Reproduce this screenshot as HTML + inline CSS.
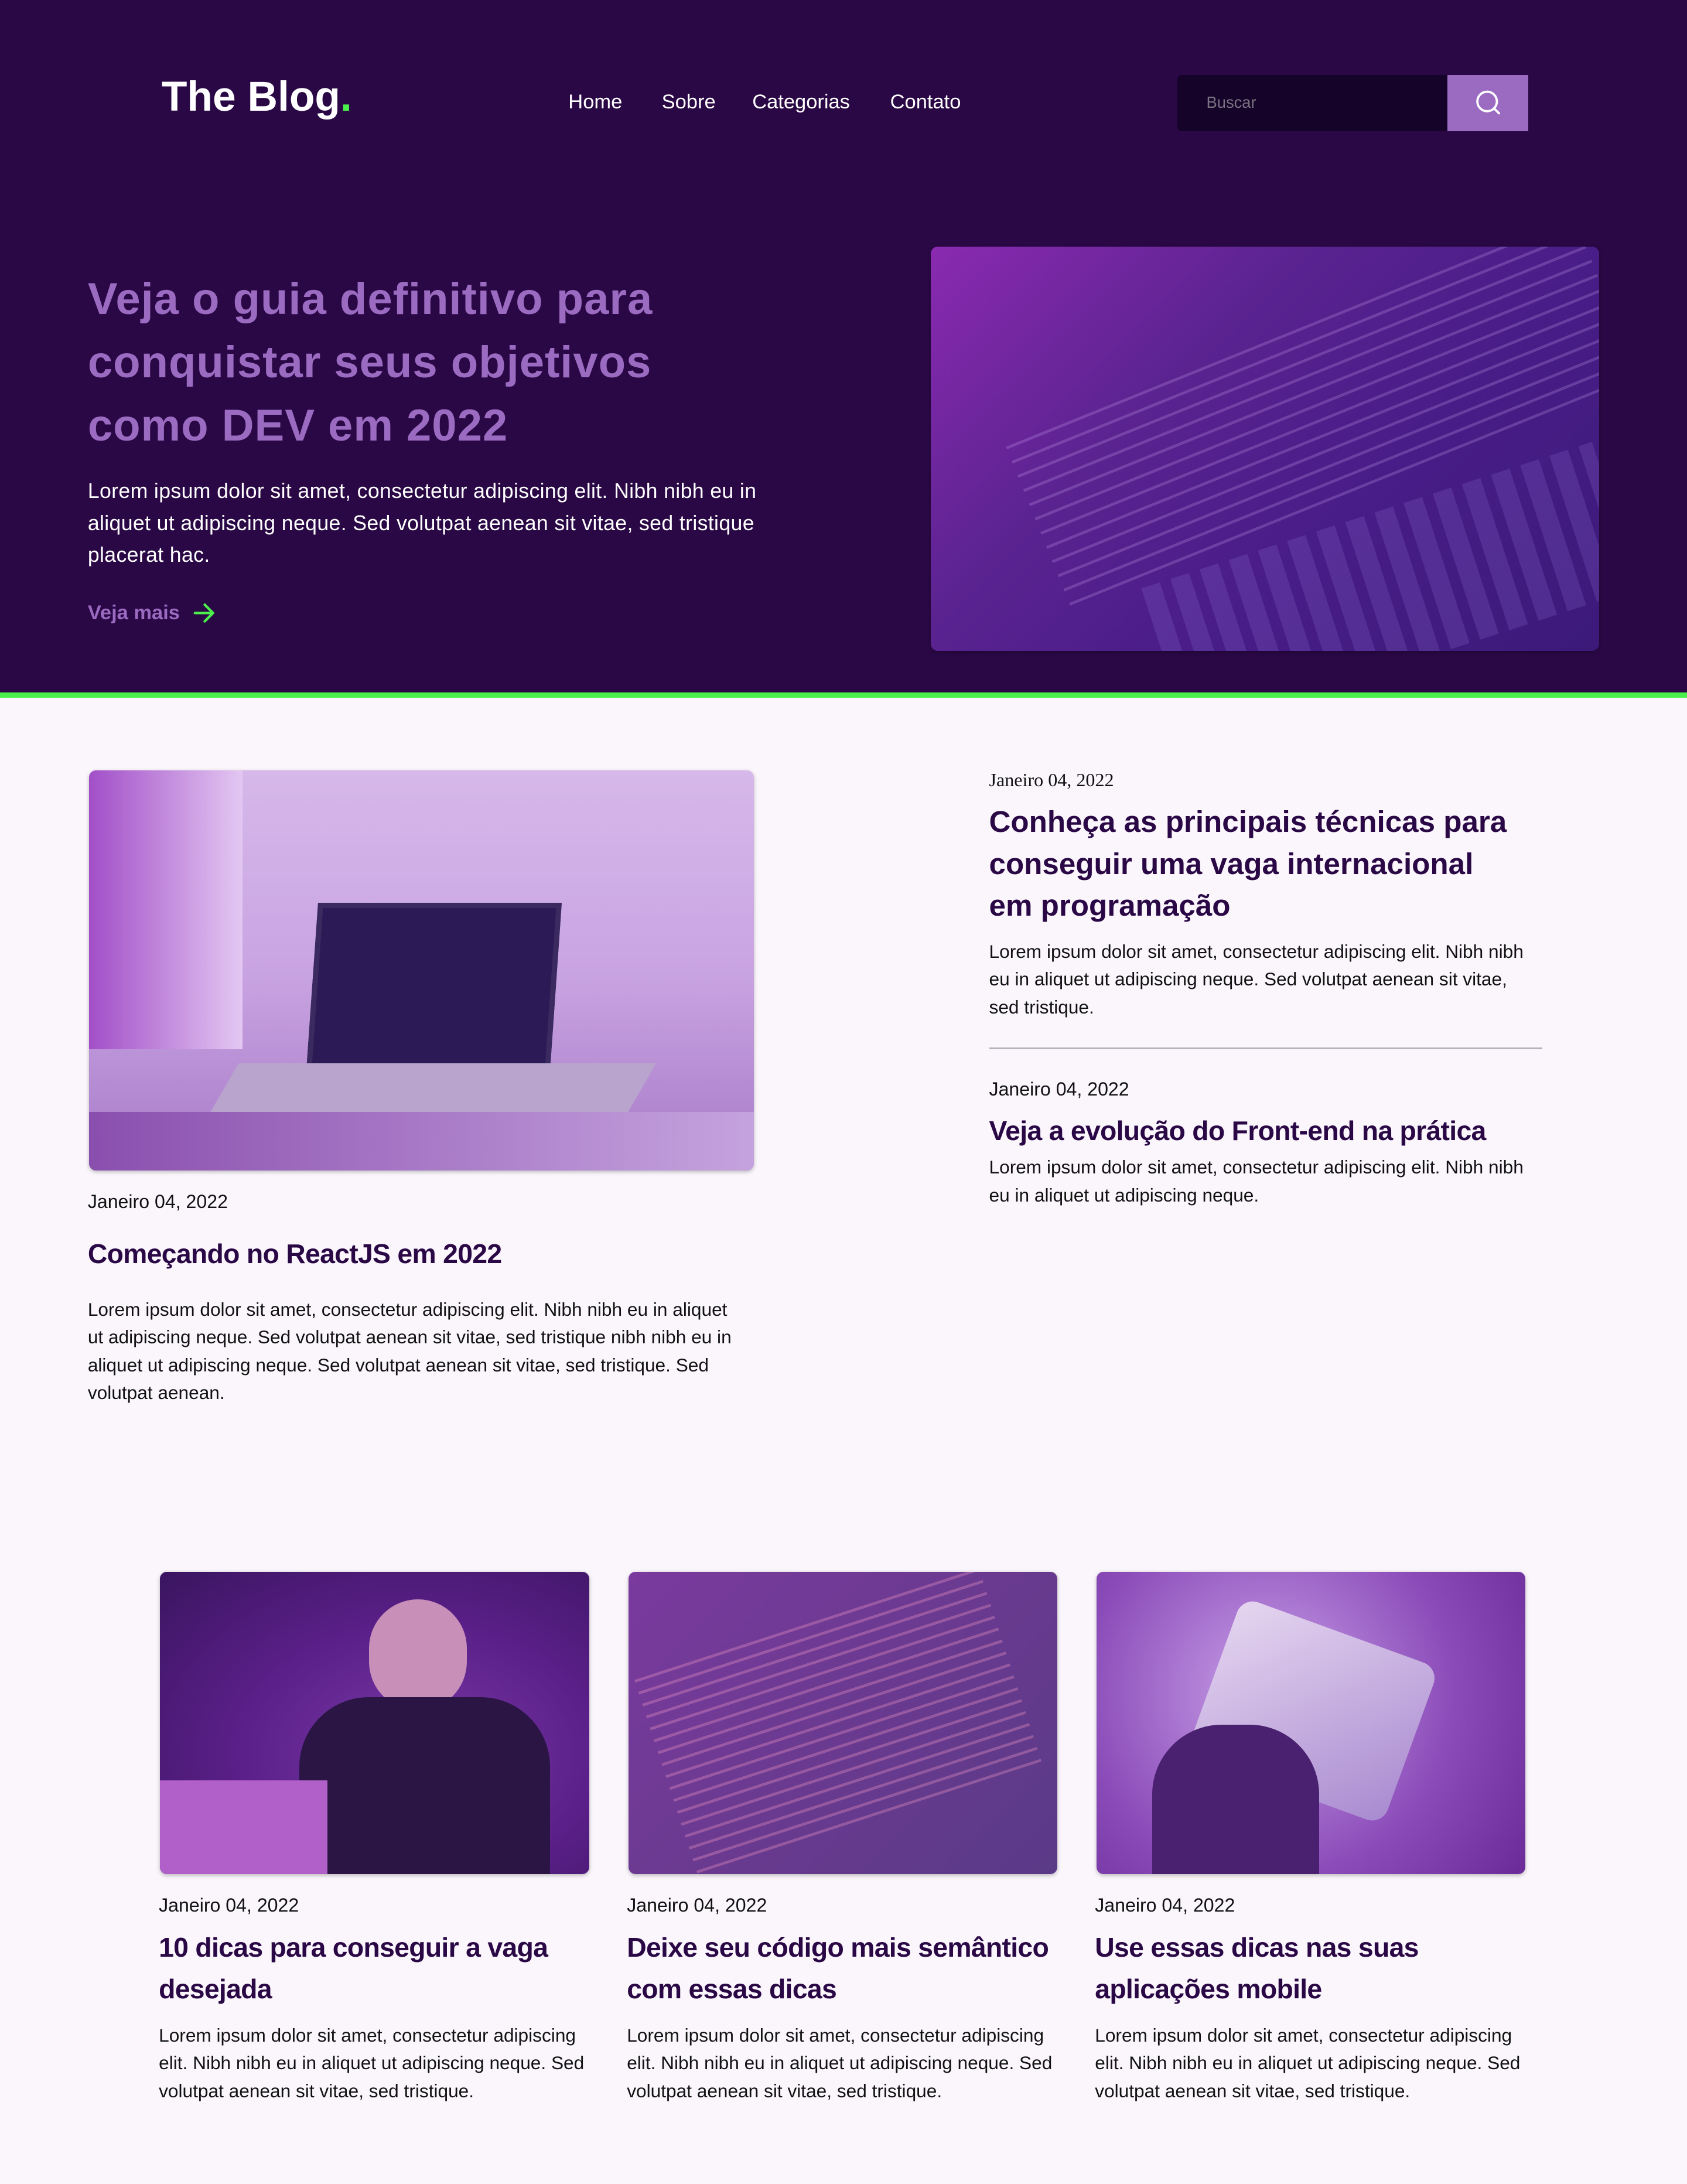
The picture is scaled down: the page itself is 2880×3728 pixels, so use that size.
<!DOCTYPE html>
<html><head><meta charset="utf-8"><style>
*{margin:0;padding:0;box-sizing:border-box}
html,body{width:2880px;height:3728px;overflow:hidden;background:#faf6fc}
#w{zoom:2.3782;width:1211px;height:1568px;position:relative;font-family:"Liberation Sans",sans-serif;background:#faf6fc}
.a{position:absolute;white-space:nowrap}
.hdr{position:absolute;left:0;top:0;width:1211px;background:#2a0845;border-bottom:4px solid #4cf04c;height:501px}
.nav{font-size:14.5px;color:#fff;top:65px}
.img{position:absolute;border-radius:5px;box-shadow:0 1px 3px rgba(0,0,0,.25);overflow:hidden}
.date{font-size:13.5px;color:#111}
.tt{font-weight:bold;color:#2a0845;font-size:19.5px;letter-spacing:-.3px;line-height:30px}
.p{font-size:13.3px;line-height:20px;color:#111;letter-spacing:0}
</style></head><body><div id="w">
<div class="hdr"></div>
<div class="a" style="left:116px;top:52px;font-size:30px;font-weight:bold;color:#fff">The Blog<span style="color:#4cf04c">.</span></div>
<div class="a nav" style="left:408px">Home</div>
<div class="a nav" style="left:475px">Sobre</div>
<div class="a nav" style="left:540px">Categorias</div>
<div class="a nav" style="left:639px">Contato</div>
<div class="a" style="left:845px;top:54px;width:195px;height:40px;background:#15032a;border-radius:3px 0 0 3px"></div>
<div class="a" style="left:866px;top:67px;font-size:11.5px;color:#7a7280">Buscar</div>
<div class="a" style="left:1039px;top:54px;width:58px;height:40px;background:#9b6bc2">
<svg width="58" height="40" viewBox="0 0 58 40"><circle cx="28.5" cy="19" r="7" fill="none" stroke="#fff" stroke-width="1.6"/><line x1="33.5" y1="24" x2="37" y2="27.5" stroke="#fff" stroke-width="1.6" stroke-linecap="round"/></svg></div>
<div class="a" style="left:63px;top:192px;font-size:32px;font-weight:bold;color:#9b6bc2;line-height:45.5px;letter-spacing:.4px">Veja o guia definitivo para<br>conquistar seus objetivos<br>como DEV em 2022</div>
<div class="a" style="left:63px;top:341px;font-size:15px;line-height:23px;color:#fff;letter-spacing:.15px">Lorem ipsum dolor sit amet, consectetur adipiscing elit. Nibh nibh eu in<br>aliquet ut adipiscing neque. Sed volutpat aenean sit vitae, sed tristique<br>placerat hac.</div>
<div class="a" style="left:63px;top:432px;font-size:14.5px;font-weight:bold;color:#9b6bc2">Veja mais</div>
<svg class="a" style="left:138px;top:431px" width="18" height="18" viewBox="0 0 18 18"><path d="M2 9H15M9 3l6 6-6 6" fill="none" stroke="#4cf04c" stroke-width="1.8" stroke-linecap="round" stroke-linejoin="round"/></svg>
<div class="img" style="left:668px;top:177px;width:480px;height:290px;background:linear-gradient(135deg,#8a2ab0 0%,#5a2390 35%,#4a1d88 60%,#3b1a7a 100%)">
<div style="position:absolute;left:60px;top:50px;width:440px;height:130px;transform:rotate(-22deg);background:repeating-linear-gradient(0deg,rgba(220,180,255,.22) 0 2px,transparent 2px 11px)"></div>
<div style="position:absolute;left:160px;top:190px;width:340px;height:110px;transform:rotate(-18deg);background:repeating-linear-gradient(90deg,rgba(150,120,220,.2) 0 14px,transparent 14px 22px)"></div></div>

<div class="img" style="left:64px;top:553px;width:477px;height:287px;background:linear-gradient(180deg,#d7b8ea 0%,#c9a4e2 50%,#a77ac8 100%)">
<div style="position:absolute;left:0;top:0;width:110px;height:200px;background:linear-gradient(90deg,#a24fc8,#e3c7f2)"></div>
<div style="position:absolute;left:160px;top:95px;width:175px;height:120px;background:#2b1a55;border:4px solid #3a2a60;transform:skewX(-4deg)"></div>
<div style="position:absolute;left:90px;top:210px;width:300px;height:60px;background:#b8a4cc;transform:skewX(-30deg)"></div>
<div style="position:absolute;left:0;top:245px;width:477px;height:42px;background:linear-gradient(90deg,#8a4fae,#c5a3de)"></div></div>
<div class="a date" style="left:63px;top:855px">Janeiro 04, 2022</div>
<div class="a tt" style="left:63px;top:885px">Começando no ReactJS em 2022</div>
<div class="a p" style="left:63px;top:930px">Lorem ipsum dolor sit amet, consectetur adipiscing elit. Nibh nibh eu in aliquet<br>ut adipiscing neque. Sed volutpat aenean sit vitae, sed tristique nibh nibh eu in<br>aliquet ut adipiscing neque. Sed volutpat aenean sit vitae, sed tristique. Sed<br>volutpat aenean.</div>

<div class="a" style="left:710px;top:552px;font-family:'Liberation Serif',serif;font-size:13.5px;color:#111">Janeiro 04, 2022</div>
<div class="a" style="left:710px;top:575px;font-size:21.5px;font-weight:bold;color:#2a0845;line-height:30px;letter-spacing:0">Conheça as principais técnicas para<br>conseguir uma vaga internacional<br>em programação</div>
<div class="a p" style="left:710px;top:673px">Lorem ipsum dolor sit amet, consectetur adipiscing elit. Nibh nibh<br>eu in aliquet ut adipiscing neque. Sed volutpat aenean sit vitae,<br>sed tristique.</div>
<div class="a" style="left:710px;top:752px;width:397px;height:1px;background:#b8b2bc"></div>
<div class="a date" style="left:710px;top:774px">Janeiro 04, 2022</div>
<div class="a tt" style="left:710px;top:797px">Veja a evolução do Front-end na prática</div>
<div class="a p" style="left:710px;top:828px">Lorem ipsum dolor sit amet, consectetur adipiscing elit. Nibh nibh<br>eu in aliquet ut adipiscing neque.</div>

<div class="img" style="left:115px;top:1128px;width:308px;height:217px;background:radial-gradient(ellipse at 60% 60%,#7a3aa8 0%,#5a1f88 50%,#3a1560 100%)">
<div style="position:absolute;left:150px;top:20px;width:70px;height:80px;border-radius:40px;background:#c890b8"></div>
<div style="position:absolute;left:100px;top:90px;width:180px;height:127px;border-radius:50px 50px 0 0;background:#2a1545"></div>
<div style="position:absolute;left:0;top:150px;width:120px;height:67px;background:#b060c8"></div></div>
<div class="img" style="left:451px;top:1128px;width:308px;height:217px;background:linear-gradient(135deg,#7a3a9e,#6a3a90 50%,#5a3a88)">
<div style="position:absolute;left:20px;top:30px;width:260px;height:150px;transform:rotate(-18deg);background:repeating-linear-gradient(0deg,rgba(255,160,200,.3) 0 2px,transparent 2px 9px)"></div></div>
<div class="img" style="left:787px;top:1128px;width:308px;height:217px;background:radial-gradient(circle at 40% 40%,#c8a0e8,#8a4ab8 60%,#6a2a98)">
<div style="position:absolute;left:80px;top:40px;width:150px;height:120px;border-radius:12px;background:linear-gradient(135deg,#e6d6f0,#a88ad0);transform:rotate(20deg)"></div>
<div style="position:absolute;left:40px;top:110px;width:120px;height:107px;border-radius:50px 50px 0 0;background:#4a2070"></div></div>

<div class="a date" style="left:114px;top:1360px">Janeiro 04, 2022</div>
<div class="a tt" style="left:114px;top:1383px">10 dicas para conseguir a vaga<br>desejada</div>
<div class="a p" style="left:114px;top:1451px">Lorem ipsum dolor sit amet, consectetur adipiscing<br>elit. Nibh nibh eu in aliquet ut adipiscing neque. Sed<br>volutpat aenean sit vitae, sed tristique.</div>
<div class="a date" style="left:450px;top:1360px">Janeiro 04, 2022</div>
<div class="a tt" style="left:450px;top:1383px">Deixe seu código mais semântico<br>com essas dicas</div>
<div class="a p" style="left:450px;top:1451px">Lorem ipsum dolor sit amet, consectetur adipiscing<br>elit. Nibh nibh eu in aliquet ut adipiscing neque. Sed<br>volutpat aenean sit vitae, sed tristique.</div>
<div class="a date" style="left:786px;top:1360px">Janeiro 04, 2022</div>
<div class="a tt" style="left:786px;top:1383px">Use essas dicas nas suas<br>aplicações mobile</div>
<div class="a p" style="left:786px;top:1451px">Lorem ipsum dolor sit amet, consectetur adipiscing<br>elit. Nibh nibh eu in aliquet ut adipiscing neque. Sed<br>volutpat aenean sit vitae, sed tristique.</div>
</div></body></html>
